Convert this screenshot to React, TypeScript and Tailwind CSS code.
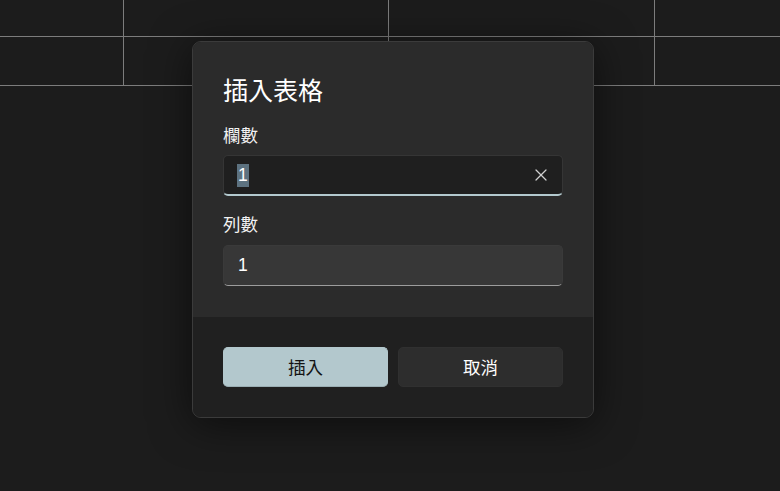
import { X } from 'lucide-react'

// Dark "插入表格" dialog over a table grid, Windows-style (125% scale).

const font = { fontFamily: '"Segoe UI", "Noto Sans CJK TC", "Noto Sans", sans-serif' }

function TableBackdrop() {
  const rows = ['h-[37px]', 'h-[49px]']
  return (
    <div className="flex flex-col">
      {rows.map((h) => (
        <div key={h} className={`grid grid-cols-[124px_265px_266px_1fr] border-b border-[#7c7c7c] ${h}`}>
          <div className="border-r border-[#7c7c7c]" />
          <div className="border-r border-[#7c7c7c]" />
          <div className="border-r border-[#7c7c7c]" />
          <div />
        </div>
      ))}
    </div>
  )
}

export default function App() {
  return (
    <div
      className="relative h-[491px] w-[780px] overflow-hidden bg-[#1c1c1c] text-white"
      style={font}
    >
      <TableBackdrop />

      <div className="absolute left-[192px] top-[41px] w-[402px] overflow-hidden rounded-[9px] border border-[#3b3b3b] shadow-[0_6px_40px_rgba(0,0,0,0.55)]">
        <div className="flex flex-col bg-[#2b2b2b] px-[30px] pb-[31px] pt-[30px]">
          <h2 className="h-[35px] text-[25px] leading-[35px] text-white">插入表格</h2>

          <label className="mt-[15px] h-[25px] text-[17.5px] leading-[25px] text-[#f2f2f2]">欄數</label>
          <div className="mt-[8px] flex h-[41px] items-center rounded-[5px] border border-[#353535] border-b-2 border-b-[#b3c9ce] bg-[#1f1f1f] pl-[13px] pr-[11px]">
            <span className="bg-[#5d7280] px-px font-['Liberation_Sans',sans-serif] text-[17.5px] leading-[23px] text-white">1</span>
            <span className="flex-1" />
            <X size={20} strokeWidth={1.5} className="text-[#d0d0d0]" />
          </div>

          <label className="mt-[15px] h-[25px] text-[17.5px] leading-[25px] text-[#f2f2f2]">列數</label>
          <div className="mt-[9px] flex h-[41px] items-center rounded-[5px] border border-[#3a3a3a] border-b-[#9c9c9c] bg-[#373737] pl-[14px]">
            <span className="font-['Liberation_Sans',sans-serif] text-[17.5px] leading-[23px] text-white">1</span>
          </div>
        </div>

        <div className="grid grid-cols-2 gap-[10px] bg-[#202020] px-[30px] pb-[30px] pt-[30px]">
          <button className="h-[40px] rounded-[5px] border border-[#b3c8cd] border-b-[#9aaeb3] bg-[#b3c8cd] text-[17.5px] text-[#141414]">
            插入
          </button>
          <button className="h-[40px] rounded-[5px] border border-[#303030] bg-[#2d2d2d] text-[17.5px] text-white">
            取消
          </button>
        </div>
      </div>
    </div>
  )
}
